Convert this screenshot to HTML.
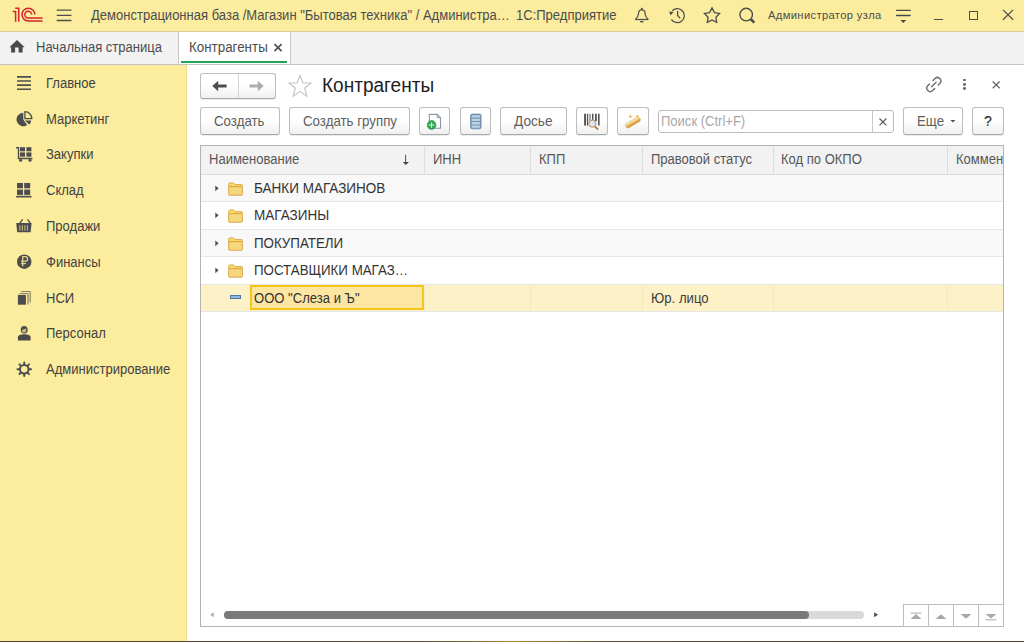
<!DOCTYPE html>
<html><head><meta charset="utf-8">
<style>
*{box-sizing:border-box;margin:0;padding:0}
html,body{width:1024px;height:642px;overflow:hidden;background:#fff;font-family:"Liberation Sans",sans-serif;color:#4d4d4d}
.a{position:absolute}
.t{position:absolute;white-space:nowrap;line-height:1}
.s{transform:scaleX(.93);transform-origin:0 0}
#hdr{left:0;top:0;width:1024px;height:32px;background:#fbec9e;border-bottom:1px solid #d9cf9c}
#tabs{left:0;top:32px;width:1024px;height:33px;background:#f2f2f2;border-bottom:1px solid #c4c4c4}
#side{left:0;top:65px;width:187px;height:577px;background:#fbec9e;border-right:1px solid #efdf8e}
.btn{position:absolute;height:28px;border:1px solid #bdbdbd;border-bottom-color:#a9a9a9;border-radius:3px;background:linear-gradient(#fff 0%,#fff 45%,#f0f0f0 100%);box-shadow:0 1px 0 rgba(0,0,0,.08)}
.bt{position:absolute;white-space:nowrap;line-height:1;font-size:14.3px;color:#5e5e5e;transform:scaleX(.93);transform-origin:0 0}
.row{position:absolute;left:201px;width:802px;height:27px;border-bottom:1px solid #e8e8e8}
.hd{position:absolute;top:146px;height:28px;border-right:1px solid #dedede}
</style></head><body>
<!-- header -->
<div id="hdr" class="a"></div>
<div id="tabs" class="a"></div>
<div id="side" class="a"></div>

<!-- 1C logo -->
<svg class="a" style="left:0;top:0" width="60" height="32" viewBox="0 0 60 32">
 <g fill="none" stroke="#d5232c" stroke-width="1.5" stroke-linecap="butt">
  <path d="M12.7 11.4H15.6V21.8"/>
  <path d="M15.2 8.2H18.7V21.8"/>
  <path d="M34.8 14.6A6.4 6.4 0 1 0 28.4 21H42.6"/>
  <path d="M31.6 14.6A3.4 3.4 0 1 0 28.2 18H42.6"/>
 </g>
</svg>
<!-- hamburger -->
<svg class="a" style="left:56px;top:8px" width="16" height="16" viewBox="0 0 16 16"><g stroke="#4d4d4d" stroke-width="1.3"><path d="M0.7 2.1H15.4M0.7 7.3H15.4M0.7 12.5H15.4"/></g></svg>
<div class="t s" style="left:91px;top:8.15px;font-size:14px;color:#4d4d4d">Демонстрационная база /Магазин "Бытовая техника" / Администра…</div>
<div class="t s" style="left:516px;top:8.15px;font-size:14px;color:#4d4d4d">1С:Предприятие</div>
<!-- bell -->
<svg class="a" style="left:632px;top:6px" width="20" height="20" viewBox="0 0 20 20"><g fill="none" stroke="#4d4d4d" stroke-width="1.25" stroke-linejoin="round"><path d="M3.2 13.5H16.4"/><path d="M3.4 13.4C5.3 11.6 6.2 10.4 6.5 8L6.8 5.9C7 4.7 8.1 3.9 9.8 3.9C11.5 3.9 12.6 4.7 12.8 5.9L13.1 8C13.4 10.4 14.3 11.6 16.2 13.4"/></g><circle cx="9.8" cy="2.9" r="1.05" fill="#4d4d4d"/><path d="M7.9 15A1.9 1.6 0 0 0 11.7 15Z" fill="#4d4d4d"/></svg>
<!-- history -->
<svg class="a" style="left:667px;top:6px" width="20" height="20" viewBox="0 0 20 20"><g fill="none" stroke="#4d4d4d" stroke-width="1.3"><path d="M4.4 13.3A7 7 0 1 0 5.3 4.7"/><path d="M10.6 5.1V9.5L13.2 12.4"/></g><path d="M2.2 5.6L6.6 5.9L3.6 9.4Z" fill="#4d4d4d"/></svg>
<!-- star -->
<svg class="a" style="left:702px;top:5px" width="20" height="20" viewBox="0 0 20 20"><path d="M10.00 2.90L12.41 7.58L17.61 8.43L13.90 12.17L14.70 17.37L10.00 15.00L5.30 17.37L6.10 12.17L2.39 8.43L7.59 7.58Z" fill="none" stroke="#4d4d4d" stroke-width="1.3" stroke-linejoin="miter"/></svg>
<!-- search -->
<svg class="a" style="left:737px;top:5px" width="20" height="20" viewBox="0 0 20 20"><circle cx="9.2" cy="9.6" r="6.3" fill="none" stroke="#4d4d4d" stroke-width="1.4"/><path d="M13.6 14L17.3 17.6" stroke="#4d4d4d" stroke-width="2.6"/></svg>
<div class="t" style="left:768px;top:10.2px;font-size:11.2px;letter-spacing:.36px;color:#4d4d4d">Администратор узла</div>
<!-- filter -->
<svg class="a" style="left:894px;top:6px" width="20" height="20" viewBox="0 0 20 20"><g stroke="#484848" stroke-width="1.3" stroke-linecap="round"><path d="M2.6 4.4H16.2M2.6 9.5H16.2"/></g><path d="M6.4 14H12.2L9.3 17Z" fill="#484848"/></svg>
<!-- window controls -->
<div class="a" style="left:934px;top:18.6px;width:9.3px;height:1.3px;background:#4d4d4d"></div>
<div class="a" style="left:969px;top:10.9px;width:9.4px;height:9.1px;border:1.3px solid #4d4d4d"></div>
<svg class="a" style="left:1000px;top:8px" width="16" height="16" viewBox="0 0 16 16"><path d="M3 1.9L13.1 11.7M13.1 1.9L3 11.7" stroke="#4d4d4d" stroke-width="1.25"/></svg>
<!-- tabs -->
<svg class="a" style="left:8px;top:38px" width="18" height="18" viewBox="0 0 18 18"><path d="M9 2L16.6 9.3H14.6V14.4H10.6V9.5H7.1V14.4H3.1V9.3H1.4Z" fill="#4a4a4a"/></svg>
<div class="t s" style="left:36px;top:40.15px;font-size:14px;color:#4d4d4d">Начальная страница</div>
<div class="a" style="left:178px;top:32px;width:1px;height:32px;background:#c8c8c8"></div>
<div class="a" style="left:179px;top:32px;width:112px;height:32px;background:#fff;border-right:1px solid #c8c8c8"></div>
<div class="a" style="left:181px;top:61px;width:106px;height:2px;background:#22a455"></div>
<div class="t s" style="left:189px;top:40.15px;font-size:14px;color:#4d4d4d;transform:scaleX(.955)">Контрагенты</div>
<svg class="a" style="left:273px;top:43px" width="10" height="10" viewBox="0 0 10 10"><path d="M1.4 1.1L8.6 8.1M8.6 1.1L1.4 8.1" stroke="#4d4d4d" stroke-width="1.6"/></svg>

<!-- sidebar items -->
<svg class="a" style="left:14px;top:72px" width="22" height="22" viewBox="0 0 22 22"><g stroke="#4d4d4d" stroke-width="1.6"><path d="M3 4.9H17M3 9H17M3 13.1H17M3 17.2H17"/></g></svg>
<div class="t s" style="left:46px;top:75.75px;font-size:14px;color:#424242">Главное</div>

<svg class="a" style="left:14px;top:108px" width="22" height="22" viewBox="0 0 22 22"><path d="M9.3 11.5V4.7A6.8 6.8 0 1 0 13.2 17.1Z" fill="#4d4d4d"/><path d="M10.9 12.4H17.2A6.5 6.5 0 0 1 15.2 16.6Z" fill="#4d4d4d"/><path d="M10.9 10.7V3.6A7 7 0 0 1 17.8 10.7Z" fill="none" stroke="#4d4d4d" stroke-width="1.3" stroke-linejoin="round"/></svg>
<div class="t s" style="left:46px;top:111.55px;font-size:14px;color:#424242">Маркетинг</div>

<svg class="a" style="left:14px;top:144px" width="22" height="22" viewBox="0 0 22 22"><g fill="none" stroke="#4d4d4d" stroke-width="1.4"><path d="M2 3.7H4.5V14.5H18.4"/></g><g fill="#4d4d4d"><rect x="6" y="3.2" width="5" height="4.1"/><rect x="12.4" y="3.2" width="5" height="4.1"/><rect x="6" y="8.4" width="5" height="4.3"/><rect x="12.4" y="8.4" width="5" height="4.3"/><circle cx="6.6" cy="16.3" r="1.5"/><circle cx="16" cy="16.3" r="1.5"/></g></svg>
<div class="t s" style="left:46px;top:147.35px;font-size:14px;color:#424242">Закупки</div>

<svg class="a" style="left:14px;top:180px" width="22" height="22" viewBox="0 0 22 22"><g fill="#4d4d4d"><rect x="3" y="3" width="6" height="5.3"/><rect x="10.2" y="3" width="6" height="5.3"/><rect x="3" y="9.6" width="6" height="5.3"/><rect x="10.2" y="9.6" width="6" height="5.3"/><rect x="2.2" y="15.8" width="15.3" height="1.7"/></g></svg>
<div class="t s" style="left:46px;top:183.15px;font-size:14px;color:#424242">Склад</div>

<svg class="a" style="left:14px;top:216px" width="22" height="22" viewBox="0 0 22 22"><g fill="none" stroke="#4d4d4d" stroke-width="1.3"><path d="M5.8 7.2L8.6 3.3M13.5 3.3L16.3 7.2"/></g><path d="M2.2 7H17.6L16.6 16.2H3.2Z" fill="#4d4d4d"/><g fill="#fbec9e" opacity=".75"><rect x="5.4" y="9.2" width="1" height="5.4"/><rect x="7.9" y="9.2" width="1" height="5.4"/><rect x="10.4" y="9.2" width="1" height="5.4"/><rect x="12.9" y="9.2" width="1" height="5.4"/></g></svg>
<div class="t s" style="left:46px;top:218.95px;font-size:14px;color:#424242">Продажи</div>

<svg class="a" style="left:14px;top:251px" width="22" height="22" viewBox="0 0 22 22"><circle cx="10.25" cy="10.7" r="7.2" fill="#4d4d4d"/><g fill="none" stroke="#fbec9e" stroke-width="1.3" opacity=".85"><path d="M8.7 15.2V5.6H11.3A2.3 2.3 0 0 1 11.3 10.2H7"/><path d="M7 12.5H12"/></g></svg>
<div class="t s" style="left:46px;top:254.75px;font-size:14px;color:#424242">Финансы</div>

<svg class="a" style="left:14px;top:287px" width="22" height="22" viewBox="0 0 22 22"><g fill="#8c8460"><path d="M7.2 3.9H16L16.8 4.7V15.6H15.6V5.1H7.2Z"/><path d="M5.4 5.9H13.8L14.6 6.7V17.6H13.4V7.1H5.4Z"/></g><rect x="3.9" y="7.9" width="8" height="9.8" fill="#4d4d4d"/></svg>
<div class="t s" style="left:46px;top:290.55px;font-size:14px;color:#424242">НСИ</div>

<svg class="a" style="left:14px;top:323px" width="22" height="22" viewBox="0 0 22 22"><ellipse cx="10.2" cy="6.8" rx="3.5" ry="3.8" fill="#4a4a4a"/><path d="M7.9 6.9C9.3 6.8 10.9 6.3 12.2 5.6C12.6 7.8 12 9.6 10.2 9.6C8.5 9.6 7.8 8.4 7.9 6.9Z" fill="#fbec9e" opacity=".7"/><path d="M3.9 17.6V14.3C3.9 12.5 6.3 11.3 10.2 11.3C14.1 11.3 16.6 12.5 16.6 14.3V17.6Z" fill="#4a4a4a"/></svg>
<div class="t s" style="left:46px;top:326.35px;font-size:14px;color:#424242">Персонал</div>

<svg class="a" style="left:14px;top:359px" width="22" height="22" viewBox="0 0 22 22"><g stroke="#4d4d4d" stroke-width="2" stroke-linecap="round"><path d="M10.25 3.5V5.3M10.25 15.2V17M3.5 10.2H5.3M15.2 10.2H17M5.5 5.4L6.7 6.6M13.8 13.9L15 15.1M5.5 15L6.7 13.8M13.8 6.6L15 5.4"/></g><circle cx="10.25" cy="10.2" r="4.3" fill="none" stroke="#4d4d4d" stroke-width="2"/></svg>
<div class="t s" style="left:46px;top:362.15px;font-size:14px;color:#424242">Администрирование</div>

<!-- form header -->
<div class="btn" style="left:200px;top:73px;width:76px;height:26px"></div>
<div class="a" style="left:238px;top:74px;width:1px;height:24px;background:#d4d4d4"></div>
<svg class="a" style="left:210px;top:78px" width="20" height="16" viewBox="0 0 20 16"><path d="M2.3 8L8.2 2.7V6.6H16.6V9.4H8.2V13.3Z" fill="#4d4d4d"/></svg>
<svg class="a" style="left:248px;top:78px" width="20" height="16" viewBox="0 0 20 16"><path d="M15.7 8L9.8 2.7V6.6H1.6V9.4H9.8V13.3Z" fill="#ababab"/></svg>
<svg class="a" style="left:286px;top:73px" width="28" height="26" viewBox="0 0 28 26"><path d="M14 2.3L16.9 10H25.2L18.6 15L21 23.3L14 18.4L7 23.3L9.4 15L2.8 10H11.1Z" fill="none" stroke="#bfc5cc" stroke-width="1.15" stroke-linejoin="round"/></svg>
<div class="t" style="left:322.3px;top:75px;font-size:20px;color:#1e1e1e;transform:scaleX(.952);transform-origin:0 0">Контрагенты</div>
<svg class="a" style="left:920px;top:72px" width="26" height="26" viewBox="0 0 26 26"><g transform="translate(13.8 12.6) rotate(-45)" fill="none" stroke="#707070" stroke-width="1.45" stroke-linecap="round"><path d="M2.3 -3.4H5.1A3.4 3.4 0 0 1 5.1 3.4H2.9"/><path d="M-2.3 3.4H-5.1A3.4 3.4 0 0 1 -5.1 -3.4H-2.7"/><path d="M-3.1 0H3.2"/></g></svg>

<div class="a" style="left:962.8px;top:78.6px;width:2.8px;height:2.8px;border-radius:50%;background:#666"></div>
<div class="a" style="left:962.8px;top:82.9px;width:2.8px;height:2.8px;border-radius:50%;background:#666"></div>
<div class="a" style="left:962.8px;top:87.2px;width:2.8px;height:2.8px;border-radius:50%;background:#666"></div>
<svg class="a" style="left:990px;top:79px" width="12" height="12" viewBox="0 0 12 12"><path d="M2.7 2.5L9.7 9.2M9.7 2.5L2.7 9.2" stroke="#666" stroke-width="1.2"/></svg>

<!-- command bar -->
<div class="btn" style="left:200px;top:107px;width:80px"></div>
<div class="bt" style="left:214px;top:113.55px">Создать</div>
<div class="btn" style="left:289px;top:107px;width:121px"></div>
<div class="bt" style="left:303px;top:113.55px">Создать группу</div>
<div class="btn" style="left:419px;top:107px;width:31px"></div>
<svg class="a" style="left:424px;top:111px" width="22" height="22" viewBox="0 0 22 22"><path d="M5.3 3.4H13.2L16.5 6.7V17.2H5.3Z" fill="#fff" stroke="#8a97a6" stroke-width="1.1"/><path d="M13.2 3.4V6.7H16.5" fill="none" stroke="#8a97a6" stroke-width="1"/><circle cx="7.6" cy="14" r="4.4" fill="#2ea84a" stroke="#1f8a3a" stroke-width=".6"/><path d="M7.6 11.2V16.8M4.8 14H10.4" stroke="#e8f6ea" stroke-width="1"/></svg>
<div class="btn" style="left:460px;top:107px;width:31px"></div>
<svg class="a" style="left:465px;top:111px" width="22" height="22" viewBox="0 0 22 22"><rect x="5.5" y="3" width="10.6" height="14.8" rx="1.6" fill="#7896b5" stroke="#6884a3" stroke-width=".7"/><g fill="#bcd2e6"><rect x="6.5" y="4.3" width="8.6" height="2.3" rx="1"/><rect x="6.5" y="7.7" width="8.6" height="2.3" rx="1"/><rect x="6.5" y="11.1" width="8.6" height="2.3" rx="1"/><rect x="6.5" y="14.5" width="8.6" height="2.2" rx="1"/></g></svg>
<div class="btn" style="left:500px;top:107px;width:67px"></div>
<div class="bt" style="left:514px;top:113.55px;transform:scaleX(.955)">Досье</div>
<div class="btn" style="left:576px;top:107px;width:32px"></div>
<svg class="a" style="left:581px;top:111px" width="22" height="22" viewBox="0 0 22 22"><g fill="#555"><rect x="3.1" y="2.7" width="1.9" height="11.8"/><rect x="5.9" y="2.7" width="1.3" height="11.8"/><rect x="8.5" y="2.7" width="1" height="7"/><rect x="11" y="2.7" width="1.5" height="6.5"/><rect x="14" y="2.7" width="1.8" height="7.5"/><rect x="17" y="2.7" width="1.6" height="11.8"/></g><path d="M13.8 15.4L16.6 18.2" stroke="#b07a4a" stroke-width="1.8" stroke-linecap="round"/><circle cx="11.3" cy="12.6" r="3.5" fill="#d6e6fb" stroke="#c49a72" stroke-width="1.1"/></svg>
<div class="btn" style="left:617px;top:107px;width:32px"></div>
<svg class="a" style="left:622px;top:111px" width="22" height="22" viewBox="0 0 22 22"><defs><linearGradient id="lg1" x1="0" y1="0" x2="0" y2="1"><stop offset="0" stop-color="#f9e3b2"/><stop offset=".45" stop-color="#eec173"/><stop offset="1" stop-color="#d39a3a"/></linearGradient></defs><circle cx="8.3" cy="5.6" r="1.3" fill="#f0b555"/><circle cx="15.4" cy="5.4" r="1.3" fill="#f0b555"/><g transform="translate(10.8 11.3) rotate(-30)"><rect x="-8.6" y="-2.9" width="17.2" height="5.8" rx="2.9" fill="url(#lg1)"/><path d="M-7 -0.6H7" stroke="#fbe8c2" stroke-width=".9" opacity=".8"/><path d="M-7 1.4H7" stroke="#c88c2c" stroke-width=".6" opacity=".6"/></g></svg>
<div class="a" style="left:658px;top:110px;width:236px;height:23px;border:1px solid #bdbdbd;border-radius:3px;background:#fff"></div>
<div class="a" style="left:871.6px;top:111px;width:1px;height:21px;background:#c8c8c8"></div>
<div class="t s" style="left:661px;top:114.15px;font-size:14px;color:#a8a8a8">Поиск (Ctrl+F)</div>
<svg class="a" style="left:877.5px;top:117.2px" width="10" height="10" viewBox="0 0 10 10"><path d="M1.5 1.5L8.4 8.3M8.4 1.5L1.5 8.3" stroke="#585858" stroke-width="1.15"/></svg>
<div class="btn" style="left:903px;top:107px;width:60px"></div>
<div class="bt" style="left:917px;top:113.55px">Еще</div>
<svg class="a" style="left:949px;top:118px" width="8" height="6" viewBox="0 0 8 6"><path d="M1.3 2H6.5L3.9 4.4Z" fill="#555"/></svg>
<div class="btn" style="left:972px;top:107px;width:32px"></div>
<div class="bt" style="left:983.8px;top:113.4px;color:#222;font-size:15.2px;-webkit-text-stroke:.12px #222">?</div>

<!-- table -->
<div class="a" style="left:200px;top:145px;width:804px;height:482px;border:1px solid #b3b3b3;background:#fff"></div>
<div class="a" style="left:201px;top:146px;width:802px;height:28px;background:#f2f2f2"></div>
<div class="a" style="left:201px;top:174px;width:802px;height:1px;background:#dcdcdc"></div>
<div class="a" style="left:424px;top:146px;width:1px;height:28px;background:#dcdcdc"></div>
<div class="a" style="left:530px;top:146px;width:1px;height:28px;background:#dcdcdc"></div>
<div class="a" style="left:642px;top:146px;width:1px;height:28px;background:#dcdcdc"></div>
<div class="a" style="left:773px;top:146px;width:1px;height:28px;background:#dcdcdc"></div>
<div class="a" style="left:947px;top:146px;width:1px;height:28px;background:#dcdcdc"></div>
<div class="a" style="left:201px;top:146px;width:802px;height:28px;overflow:hidden">
<div class="t s" style="left:8px;top:6.05px;font-size:14px;color:#575757">Наименование</div>
<div class="t s" style="left:232px;top:6.05px;font-size:14px;color:#575757">ИНН</div>
<div class="t s" style="left:338px;top:6.05px;font-size:14px;color:#575757">КПП</div>
<div class="t s" style="left:450px;top:6.05px;font-size:14px;color:#575757">Правовой статус</div>
<div class="t s" style="left:580px;top:6.05px;font-size:14px;color:#575757">Код по ОКПО</div>
<div class="t s" style="left:755px;top:6.05px;font-size:14px;color:#575757">Комментарий</div>
</div>
<svg class="a" style="left:400px;top:153px" width="12" height="14" viewBox="0 0 12 14"><path d="M5.6 1.8V9.6" stroke="#505050" stroke-width="1"/><path d="M2.8 8.9H8.9L5.85 12.1Z" fill="#454545"/></svg>
<div class="a" style="left:201px;top:175px;width:802px;height:26px;background:#f8f8f8"></div>
<div class="a" style="left:201px;top:201px;width:802px;height:1px;background:#e6e6e6"></div>
<div class="a" style="left:201px;top:202px;width:802px;height:27px;background:#fff"></div>
<div class="a" style="left:201px;top:229px;width:802px;height:1px;background:#e6e6e6"></div>
<div class="a" style="left:201px;top:230px;width:802px;height:26px;background:#f8f8f8"></div>
<div class="a" style="left:201px;top:256px;width:802px;height:1px;background:#e6e6e6"></div>
<div class="a" style="left:201px;top:257px;width:802px;height:27px;background:#fff"></div>
<div class="a" style="left:201px;top:284px;width:802px;height:1px;background:#e6e6e6"></div>
<div class="a" style="left:201px;top:285px;width:802px;height:26px;background:#fdf1c8"></div>
<div class="a" style="left:201px;top:311px;width:802px;height:1px;background:#e6e6e6"></div>
<svg class="a" style="left:212px;top:181.5px" width="10" height="12" viewBox="0 0 10 12"><path d="M3.3 3.4L6.6 6.3L3.3 9.2Z" fill="#4d4d4d"/></svg>
<svg class="a" style="left:226px;top:179.5px" width="20" height="18" viewBox="0 0 20 18"><path d="M2.7 6.7V4.3C2.7 3.4 3.3 2.9 4.1 2.9H7.4L9.1 4.6H15.6C16.1 4.6 16.4 4.9 16.4 5.4V6.7Z" fill="#fcdc68" stroke="#d99f3e" stroke-width=".9" stroke-linejoin="round"/><rect x="2.7" y="6.7" width="13.7" height="8.5" rx=".7" fill="#f6d87c" stroke="#d99f3e" stroke-width=".9"/></svg>
<div class="t" style="left:254px;top:181.45px;font-size:14px;color:#333;transform:scaleX(.965);transform-origin:0 0">БАНКИ МАГАЗИНОВ</div>
<svg class="a" style="left:212px;top:208.5px" width="10" height="12" viewBox="0 0 10 12"><path d="M3.3 3.4L6.6 6.3L3.3 9.2Z" fill="#4d4d4d"/></svg>
<svg class="a" style="left:226px;top:206.5px" width="20" height="18" viewBox="0 0 20 18"><path d="M2.7 6.7V4.3C2.7 3.4 3.3 2.9 4.1 2.9H7.4L9.1 4.6H15.6C16.1 4.6 16.4 4.9 16.4 5.4V6.7Z" fill="#fcdc68" stroke="#d99f3e" stroke-width=".9" stroke-linejoin="round"/><rect x="2.7" y="6.7" width="13.7" height="8.5" rx=".7" fill="#f6d87c" stroke="#d99f3e" stroke-width=".9"/></svg>
<div class="t" style="left:254px;top:208.45px;font-size:14px;color:#333;transform:scaleX(.965);transform-origin:0 0">МАГАЗИНЫ</div>
<svg class="a" style="left:212px;top:236.5px" width="10" height="12" viewBox="0 0 10 12"><path d="M3.3 3.4L6.6 6.3L3.3 9.2Z" fill="#4d4d4d"/></svg>
<svg class="a" style="left:226px;top:234.5px" width="20" height="18" viewBox="0 0 20 18"><path d="M2.7 6.7V4.3C2.7 3.4 3.3 2.9 4.1 2.9H7.4L9.1 4.6H15.6C16.1 4.6 16.4 4.9 16.4 5.4V6.7Z" fill="#fcdc68" stroke="#d99f3e" stroke-width=".9" stroke-linejoin="round"/><rect x="2.7" y="6.7" width="13.7" height="8.5" rx=".7" fill="#f6d87c" stroke="#d99f3e" stroke-width=".9"/></svg>
<div class="t" style="left:254px;top:236.45px;font-size:14px;color:#333;transform:scaleX(.952);transform-origin:0 0">ПОКУПАТЕЛИ</div>
<svg class="a" style="left:212px;top:263.5px" width="10" height="12" viewBox="0 0 10 12"><path d="M3.3 3.4L6.6 6.3L3.3 9.2Z" fill="#4d4d4d"/></svg>
<svg class="a" style="left:226px;top:261.5px" width="20" height="18" viewBox="0 0 20 18"><path d="M2.7 6.7V4.3C2.7 3.4 3.3 2.9 4.1 2.9H7.4L9.1 4.6H15.6C16.1 4.6 16.4 4.9 16.4 5.4V6.7Z" fill="#fcdc68" stroke="#d99f3e" stroke-width=".9" stroke-linejoin="round"/><rect x="2.7" y="6.7" width="13.7" height="8.5" rx=".7" fill="#f6d87c" stroke="#d99f3e" stroke-width=".9"/></svg>
<div class="t" style="left:254px;top:263.45px;font-size:14px;color:#333;transform:scaleX(.951);transform-origin:0 0">ПОСТАВЩИКИ МАГАЗ…</div>
<div class="a" style="left:424px;top:285px;width:1px;height:26px;background:#f5e8bc"></div>
<div class="a" style="left:530px;top:285px;width:1px;height:26px;background:#f5e8bc"></div>
<div class="a" style="left:642px;top:285px;width:1px;height:26px;background:#f5e8bc"></div>
<div class="a" style="left:773px;top:285px;width:1px;height:26px;background:#f5e8bc"></div>
<div class="a" style="left:947px;top:285px;width:1px;height:26px;background:#f5e8bc"></div>
<div class="a" style="left:250px;top:285.4px;width:174px;height:25px;background:#fce6a2;border:2px solid #f6c51c"></div>
<div class="a" style="left:230px;top:295.2px;width:11.4px;height:4px;background:#8fb8e2;border:1px solid #4f7aa8"></div>
<div class="t" style="left:254px;top:291.45px;font-size:14px;color:#333;transform:scaleX(.933);transform-origin:0 0">ООО "Слеза и Ъ"</div>
<div class="t" style="left:651px;top:291.45px;font-size:14px;color:#3f3f3f;transform:scaleX(.94);transform-origin:0 0">Юр. лицо</div>

<svg class="a" style="left:206px;top:610px" width="10" height="10" viewBox="0 0 10 10"><path d="M7.8 2.2V7.2L4 4.7Z" fill="#b0b0b0"/></svg>
<div class="a" style="left:224px;top:610.8px;width:640px;height:8px;border-radius:4px;background:#d9d9d9"></div>
<div class="a" style="left:224px;top:610.8px;width:585px;height:8px;border-radius:4px;background:#7a7a7a"></div>
<svg class="a" style="left:871px;top:610px" width="10" height="10" viewBox="0 0 10 10"><path d="M3.2 2.3V7.2L7 4.75Z" fill="#4d4d4d"/></svg>
<div class="a" style="left:903px;top:604px;width:101px;height:23px;border:1px solid #bdbdbd;background:#fff"></div>
<div class="a" style="left:928px;top:604.5px;width:1px;height:21px;background:#bdbdbd"></div>
<div class="a" style="left:953px;top:604.5px;width:1px;height:21px;background:#bdbdbd"></div>
<div class="a" style="left:978px;top:604.5px;width:1px;height:21px;background:#bdbdbd"></div>
<svg class="a" style="left:904px;top:605px" width="100" height="22" viewBox="0 0 100 22"><g fill="#a8a8a8"><path d="M6.6 7.6H17.4V8.6H6.6Z"/><path d="M12 9.1L17.4 13.9H6.6Z"/><path d="M37 9.3L42.4 13.9H31.6Z"/><path d="M56.6 9.1H67.4L62 13.7Z"/><path d="M81.6 9.1H92.4L87 13.4Z"/><path d="M81.6 14.3H92.4V15.3H81.6Z"/></g></svg>
<div class="a" style="left:0;top:641px;width:1024px;height:1px;background:linear-gradient(90deg,#4f4030 0%,#5a4830 40%,#8a6a35 47%,#b8862e 50%,#9a7433 53%,#5a4830 60%,#4f4030 100%)"></div>
</body></html>
